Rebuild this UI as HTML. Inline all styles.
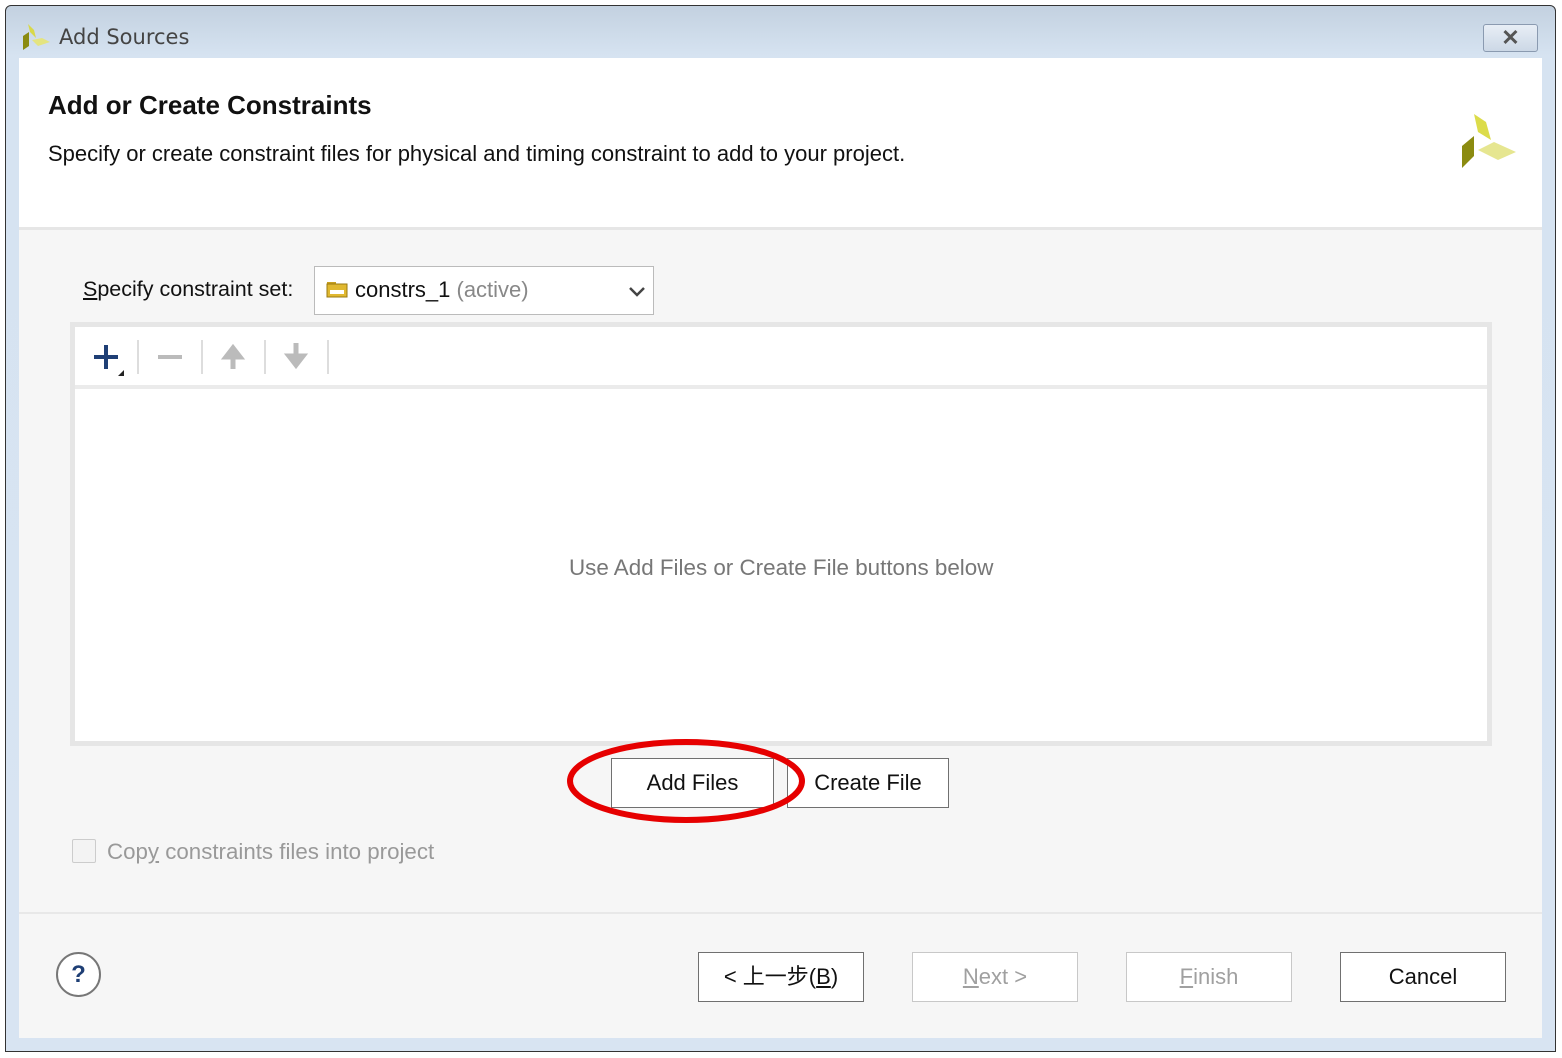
<!DOCTYPE html>
<html><head><meta charset="utf-8"><style>
*{margin:0;padding:0;box-sizing:border-box}
body{width:1562px;height:1058px;background:#fff;position:relative;font-family:"Liberation Sans","Noto Sans CJK SC",sans-serif;overflow:hidden}
.abs{position:absolute}
.win{left:5px;top:5px;width:1551px;height:1047px;border:1px solid #333;border-radius:6px 6px 0 0;background:linear-gradient(#c3d1e0,#d6e3f1 50px,#d8e4f2);}
.content{left:19px;top:58px;width:1523px;height:980px;background:#f6f6f6}
.hdr{left:19px;top:58px;width:1523px;height:172px;background:#fff;border-bottom:3px solid #e6e6e6}
.btn{position:absolute;background:#fff;border:1px solid #707070;font-size:22px;text-align:center;color:#111}
.dis{border-color:#c8c8c8;color:#a0a0a0}
</style></head><body>
<div class="abs win"></div>
<svg class="abs" style="left:20px;top:22px" width="32" height="30" viewBox="0 0 32 30"><polygon points="8,2 14,8 16,16 10,10" fill="#d8d84a"/><polygon points="3,14 9,10 9,24 3,28" fill="#8b8b10"/><polygon points="12,18 22,16 30,20 18,24" fill="#e4e480"/></svg>
<div class="abs" style="left:59px;top:25px;font-size:21px;color:#444;font-family:'DejaVu Sans',sans-serif">Add Sources</div>
<div class="abs" style="left:1483px;top:24px;width:55px;height:28px;border:1px solid #8a9ab0;border-radius:3px;background:linear-gradient(#e8eef6,#ccd8e6);text-align:center;font-size:22px;line-height:26px;color:#555;font-weight:bold">✕</div>
<div class="abs content"></div>
<div class="abs hdr"></div>
<div class="abs" style="left:48px;top:90px;font-size:26px;font-weight:bold;color:#111">Add or Create Constraints</div>
<div class="abs" style="left:48px;top:141px;font-size:22px;color:#111">Specify or create constraint files for physical and timing constraint to add to your project.</div>
<svg class="abs" style="left:1458px;top:112px" width="60" height="58" viewBox="0 0 60 58"><polygon points="16,2 28,10 33,28 20,20" fill="#dcdc4a"/><polygon points="4,34 16,24 16,44 4,56" fill="#8b8b10"/><polygon points="20,38 36,30 58,40 40,48" fill="#e6e690"/></svg>
<div class="abs" style="left:83px;top:277px;font-size:21.5px;color:#111"><u>S</u>pecify constraint set:</div>
<div class="abs" style="left:314px;top:266px;width:340px;height:49px;background:#fff;border:1px solid #bbb"></div>
<svg class="abs" style="left:326px;top:280px" width="22" height="18"><rect x="1" y="2" width="9" height="4" fill="#c8a020"/><rect x="1" y="4" width="20" height="13" fill="#e0b830" stroke="#9a7a10"/><rect x="4" y="10" width="14" height="4" fill="#fff"/></svg>
<div class="abs" style="left:355px;top:277px;font-size:22px;color:#111">constrs_1 <span style="color:#888">(active)</span></div>
<svg class="abs" style="left:627px;top:284px" width="20" height="14"><polyline points="3,4 10,11 17,4" fill="none" stroke="#444" stroke-width="2.5"/></svg>
<div class="abs" style="left:70px;top:322px;width:1422px;height:424px;background:#fff;border:5px solid #e6e6e6"></div>
<div class="abs" style="left:75px;top:385px;width:1412px;height:4px;background:#ebebeb"></div>
<svg class="abs" style="left:88px;top:338px" width="250" height="42"><path d="M6 19h24M18 7v24" stroke="#1f3f75" stroke-width="4"/><polygon points="30,38 36,38 36,32" fill="#222"/><line x1="50" y1="2" x2="50" y2="36" stroke="#ddd" stroke-width="2"/><path d="M70 19h24" stroke="#bbb" stroke-width="4"/><line x1="114" y1="2" x2="114" y2="36" stroke="#ddd" stroke-width="2"/><path d="M145 31V18M138 19l7-9 7 9z" stroke="#bbb" stroke-width="5" fill="#bbb"/><line x1="177" y1="2" x2="177" y2="36" stroke="#ddd" stroke-width="2"/><path d="M208 5v13M201 18l7 9 7-9z" stroke="#bbb" stroke-width="5" fill="#bbb"/><line x1="240" y1="2" x2="240" y2="36" stroke="#ddd" stroke-width="2"/></svg>
<div class="abs" style="left:569px;top:555px;font-size:22.4px;color:#777">Use Add Files or Create File buttons below</div>
<div class="btn" style="left:611px;top:758px;width:163px;height:50px;line-height:48px">Add Files</div>
<div class="btn" style="left:787px;top:758px;width:162px;height:50px;line-height:48px">Create File</div>
<svg class="abs" style="left:562px;top:733px" width="248" height="96"><ellipse cx="124" cy="48" rx="116" ry="39" fill="none" stroke="#e60000" stroke-width="6"/></svg>
<div class="abs" style="left:72px;top:839px;width:24px;height:24px;border:1px solid #ccc;background:#f3f3f3;border-radius:2px"></div>
<div class="abs" style="left:107px;top:839px;font-size:22.3px;color:#999">Cop<u>y</u> constraints files into project</div>
<div class="abs" style="left:19px;top:912px;width:1523px;height:2px;background:#e8e8e8"></div>
<div class="abs" style="left:56px;top:952px;width:45px;height:45px;border:2px solid #777;border-radius:50%;background:#fff;text-align:center;font-size:24px;font-weight:bold;line-height:41px;color:#1f3f75">?</div>
<div class="btn" style="left:698px;top:952px;width:166px;height:50px;line-height:48px">&lt; 上一步(<u>B</u>)</div>
<div class="btn dis" style="left:912px;top:952px;width:166px;height:50px;line-height:48px"><u>N</u>ext &gt;</div>
<div class="btn dis" style="left:1126px;top:952px;width:166px;height:50px;line-height:48px"><u>F</u>inish</div>
<div class="btn" style="left:1340px;top:952px;width:166px;height:50px;line-height:48px">Cancel</div>
</body></html>
